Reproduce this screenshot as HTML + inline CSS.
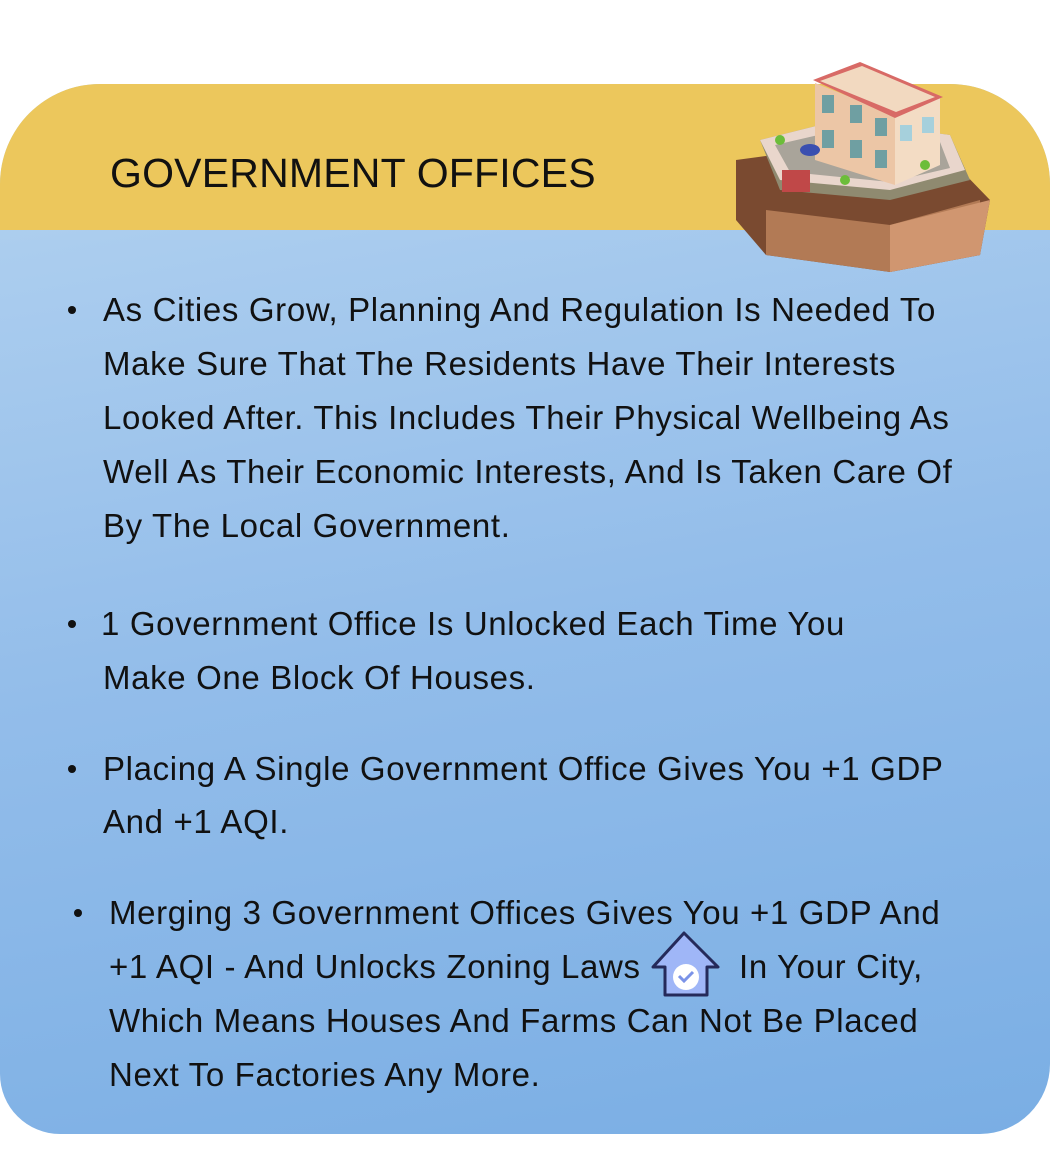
<!DOCTYPE html>
<html><head><meta charset="utf-8"><style>
html,body{margin:0;padding:0;background:#fff;}
body{width:1050px;height:1158px;position:relative;overflow:hidden;font-family:"Liberation Sans",sans-serif;}
.card{position:absolute;left:0;top:84px;width:1050px;height:1050px;border-radius:100px 100px 70px 60px;overflow:hidden;background:linear-gradient(170deg,#b4d3f0 0%,#93bdea 50%,#7aaee4 100%);}
.head{position:absolute;left:0;top:0;width:100%;height:146px;background:#ecc75c;}
.title{position:absolute;left:110px;top:66px;font-size:41px;color:#111;letter-spacing:0.2px;}
.t{position:absolute;font-size:33px;color:#111;white-space:nowrap;letter-spacing:0.65px;transform:translateY(-50%);}
.b{position:absolute;width:8px;height:8px;border-radius:50%;background:#111;}
</style></head><body>
<div class="card"><div class="head"></div><div class="title">GOVERNMENT OFFICES</div></div>
<svg style="position:absolute;left:700px;top:50px" width="350" height="240" viewBox="0 0 350 240">
<polygon points="36,110 110,100 230,88 290,150 280,205 190,222 66,205 36,170" fill="#7a4a30"/>
<polygon points="66,160 190,175 280,150 280,205 190,222 66,205" fill="#b27a55"/>
<polygon points="190,175 290,150 280,205 190,222" fill="#d09670"/>
<polygon points="60,90 140,70 250,85 270,130 190,150 80,140" fill="#8f8a70"/>
<polygon points="60,90 140,70 250,85 265,120 190,140 80,130" fill="#e9d6cc"/>
<polygon points="75,95 140,80 240,92 250,118 190,132 90,122" fill="#a9a49a"/>
<polygon points="115,33 195,65 195,135 115,110" fill="#ecc6a6"/>
<polygon points="195,65 240,48 240,115 195,135" fill="#f3dcc4"/>
<polygon points="113,30 160,12 243,47 195,68" fill="#d86a66"/>
<polygon points="120,31 162,16 235,47 196,62" fill="#f2d9c0"/>
<rect x="122" y="45" width="12" height="18" fill="#6f9fa2"/><rect x="150" y="55" width="12" height="18" fill="#6f9fa2"/><rect x="175" y="68" width="12" height="18" fill="#6f9fa2"/>
<rect x="122" y="80" width="12" height="18" fill="#6f9fa2"/><rect x="150" y="90" width="12" height="18" fill="#6f9fa2"/><rect x="175" y="100" width="12" height="18" fill="#6f9fa2"/>
<rect x="200" y="75" width="12" height="16" fill="#a6d0dc"/><rect x="222" y="67" width="12" height="16" fill="#a6d0dc"/>
<rect x="82" y="120" width="28" height="22" fill="#c04848"/>
<circle cx="80" cy="90" r="5" fill="#6cbd3a"/><circle cx="145" cy="130" r="5" fill="#6cbd3a"/><circle cx="225" cy="115" r="5" fill="#6cbd3a"/>
<ellipse cx="110" cy="100" rx="10" ry="6" fill="#3a4fb0"/>
</svg>
<div class="b" style="left:68px;top:306px"></div>
<div class="t" style="left:103px;top:310px">As Cities Grow, Planning And Regulation Is Needed To</div>
<div class="t" style="left:103px;top:364px">Make Sure That The Residents Have Their Interests</div>
<div class="t" style="left:103px;top:418px">Looked After. This Includes Their Physical Wellbeing As</div>
<div class="t" style="left:103px;top:472px">Well As Their Economic Interests, And Is Taken Care Of</div>
<div class="t" style="left:103px;top:526px">By The Local Government.</div>
<div class="b" style="left:68px;top:620px"></div>
<div class="t" style="left:101px;top:624px">1 Government Office Is Unlocked Each Time You</div>
<div class="t" style="left:103px;top:678px">Make One Block Of Houses.</div>
<div class="b" style="left:68px;top:765px"></div>
<div class="t" style="left:103px;top:769px">Placing A Single Government Office Gives You +1 GDP</div>
<div class="t" style="left:103px;top:822px">And +1 AQI.</div>
<div class="b" style="left:74px;top:909px"></div>
<div class="t" style="left:109px;top:913px">Merging 3 Government Offices Gives You +1 GDP And</div>
<div class="t" style="left:109px;top:967px">+1 AQI - And Unlocks Zoning Laws</div>
<svg style="position:absolute;left:650px;top:930px" width="72" height="68" viewBox="0 0 72 68">
<polygon points="34,3 68,37 57,37 57,65 15,65 15,37 3,37" fill="#9fb6f7" stroke="#252a5a" stroke-width="3" stroke-linejoin="round"/>
<circle cx="36" cy="47" r="13" fill="#fff"/>
<polyline points="29,46 34,51 43,42" fill="none" stroke="#7b93e8" stroke-width="3"/>
</svg>
<div class="t" style="left:739px;top:967px">In Your City,</div>
<div class="t" style="left:109px;top:1021px">Which Means Houses And Farms Can Not Be Placed</div>
<div class="t" style="left:109px;top:1075px">Next To Factories Any More.</div>
</body></html>
